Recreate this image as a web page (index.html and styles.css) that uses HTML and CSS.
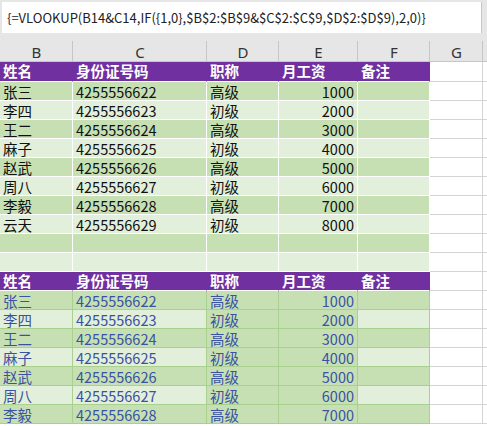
FILE: index.html
```html
<!DOCTYPE html>
<html lang="zh">
<head>
<meta charset="utf-8">
<title>Sheet</title>
<link rel="stylesheet" href="styles.css">
</head>
<body>
<div class="formula-bar">
  <div class="formula-box">{=VLOOKUP(B14&amp;C14,IF({1,0},$B$2:$B$9&amp;$C$2:$C$9,$D$2:$D$9),2,0)}</div>
</div>
<div class="sheet">
  <div class="ch">B</div><div class="ch">C</div><div class="ch">D</div><div class="ch">E</div><div class="ch">F</div><div class="ch">G</div><div class="ch ch-h"></div>

  <div class="c hd">姓名</div><div class="c hd">身份证号码</div><div class="c hd">职称</div><div class="c hd">月工资</div><div class="c hd">备注</div><div class="c g"></div><div class="c g h"></div>

  <div class="c dk">张三</div><div class="c dk">4255556622</div><div class="c dk">高级</div><div class="c dk num">1000</div><div class="c dk"></div><div class="c g"></div><div class="c g h"></div>
  <div class="c lt">李四</div><div class="c lt">4255556623</div><div class="c lt">初级</div><div class="c lt num">2000</div><div class="c lt"></div><div class="c g"></div><div class="c g h"></div>
  <div class="c dk">王二</div><div class="c dk">4255556624</div><div class="c dk">高级</div><div class="c dk num">3000</div><div class="c dk"></div><div class="c g"></div><div class="c g h"></div>
  <div class="c lt">麻子</div><div class="c lt">4255556625</div><div class="c lt">初级</div><div class="c lt num">4000</div><div class="c lt"></div><div class="c g"></div><div class="c g h"></div>
  <div class="c dk">赵武</div><div class="c dk">4255556626</div><div class="c dk">高级</div><div class="c dk num">5000</div><div class="c dk"></div><div class="c g"></div><div class="c g h"></div>
  <div class="c lt">周八</div><div class="c lt">4255556627</div><div class="c lt">初级</div><div class="c lt num">6000</div><div class="c lt"></div><div class="c g"></div><div class="c g h"></div>
  <div class="c dk">李毅</div><div class="c dk">4255556628</div><div class="c dk">高级</div><div class="c dk num">7000</div><div class="c dk"></div><div class="c g"></div><div class="c g h"></div>
  <div class="c lt">云天</div><div class="c lt">4255556629</div><div class="c lt">初级</div><div class="c lt num">8000</div><div class="c lt"></div><div class="c g"></div><div class="c g h"></div>
  <div class="c dk"></div><div class="c dk"></div><div class="c dk"></div><div class="c dk"></div><div class="c dk"></div><div class="c g"></div><div class="c g h"></div>
  <div class="c lt"></div><div class="c lt"></div><div class="c lt"></div><div class="c lt"></div><div class="c lt"></div><div class="c g"></div><div class="c g h"></div>

  <div class="c hd">姓名</div><div class="c hd">身份证号码</div><div class="c hd">职称</div><div class="c hd">月工资</div><div class="c hd">备注</div><div class="c g"></div><div class="c g h"></div>

  <div class="c dk2 t2">张三</div><div class="c dk2 t2">4255556622</div><div class="c dk2 t2">高级</div><div class="c dk2 t2 num">1000</div><div class="c dk2"></div><div class="c g"></div><div class="c g h"></div>
  <div class="c lt2 t2">李四</div><div class="c lt2 t2">4255556623</div><div class="c dk2 t2">初级</div><div class="c dk2 t2 num">2000</div><div class="c lt2"></div><div class="c g"></div><div class="c g h"></div>
  <div class="c dk2 t2">王二</div><div class="c dk2 t2">4255556624</div><div class="c dk2 t2">高级</div><div class="c dk2 t2 num">3000</div><div class="c dk2"></div><div class="c g"></div><div class="c g h"></div>
  <div class="c lt2 t2">麻子</div><div class="c lt2 t2">4255556625</div><div class="c dk2 t2">初级</div><div class="c dk2 t2 num">4000</div><div class="c lt2"></div><div class="c g"></div><div class="c g h"></div>
  <div class="c dk2 t2">赵武</div><div class="c dk2 t2">4255556626</div><div class="c dk2 t2">高级</div><div class="c dk2 t2 num">5000</div><div class="c dk2"></div><div class="c g"></div><div class="c g h"></div>
  <div class="c lt2 t2">周八</div><div class="c lt2 t2">4255556627</div><div class="c dk2 t2">初级</div><div class="c dk2 t2 num">6000</div><div class="c lt2"></div><div class="c g"></div><div class="c g h"></div>
  <div class="c dk2 t2">李毅</div><div class="c dk2 t2">4255556628</div><div class="c dk2 t2">高级</div><div class="c dk2 t2 num">7000</div><div class="c dk2"></div><div class="c g"></div><div class="c g h"></div>
</div>
</body>
</html>
```

FILE: styles.css
```css
html, body {
  margin: 0;
  padding: 0;
  background: #ffffff;
  overflow: hidden;
}

body {
  width: 487px;
  height: 426px;
  font-family: "Noto Sans CJK SC", "Noto Sans", sans-serif;
}

.formula-bar {
  display: flex;
  height: 34px;
  background: #e6e6e6;
  padding: 2px 0 1px 2px;
  box-sizing: border-box;
}

.formula-box {
  width: 480px;
  height: 31px;
  box-sizing: border-box;
  background: #ffffff;
  border-right: 1px solid #c6c6c6;
  padding-left: 5px;
  font-size: 13px;
  line-height: 31px;
  color: #222222;
  white-space: nowrap;
  overflow: hidden;
}

.sheet {
  display: grid;
  grid-template-columns: 73px 134px 72px 79px 72px 53px 1fr;
  grid-template-rows: 28px 20px;
  grid-auto-rows: 19px;
}

.ch {
  background:
    linear-gradient(#c6c6c6, #c6c6c6) right bottom / 1px 20px no-repeat,
    #e6e6e6;
  border-bottom: 1px solid #c6c6c6;
  box-sizing: border-box;
  text-align: center;
  font-family: "Noto Sans", sans-serif;
  font-size: 15px;
  line-height: 15px;
  padding-top: 11px;
  color: #333333;
}

.ch-h {
  background: #e6e6e6;
}

.c {
  box-sizing: border-box;
  border-right: 1px solid #ffffff;
  border-bottom: 1px solid #ffffff;
  padding: 1px 3px 0;
  font-size: 14.5px;
  line-height: 18px;
  color: #111111;
  white-space: nowrap;
}

.hd {
  background: #7030a0;
  color: #ffffff;
  font-weight: 700;
  padding-top: 0;
  border-right-color: #7030a0;
}

.dk { background: #c6e0b4; }
.lt { background: #e2efda; }

.dk2 {
  background: #c6e0b4;
  border-color: #a9d08e;
}

.lt2 {
  background: #e2efda;
  border-color: #a9d08e;
}

.t2 { color: #3a52a3; }

.num { text-align: right; }

.g {
  background: #ffffff;
  border-bottom-color: #d4d4d4;
  border-right-color: #d4d4d4;
}

.h {
  border-right: none;
}
```
